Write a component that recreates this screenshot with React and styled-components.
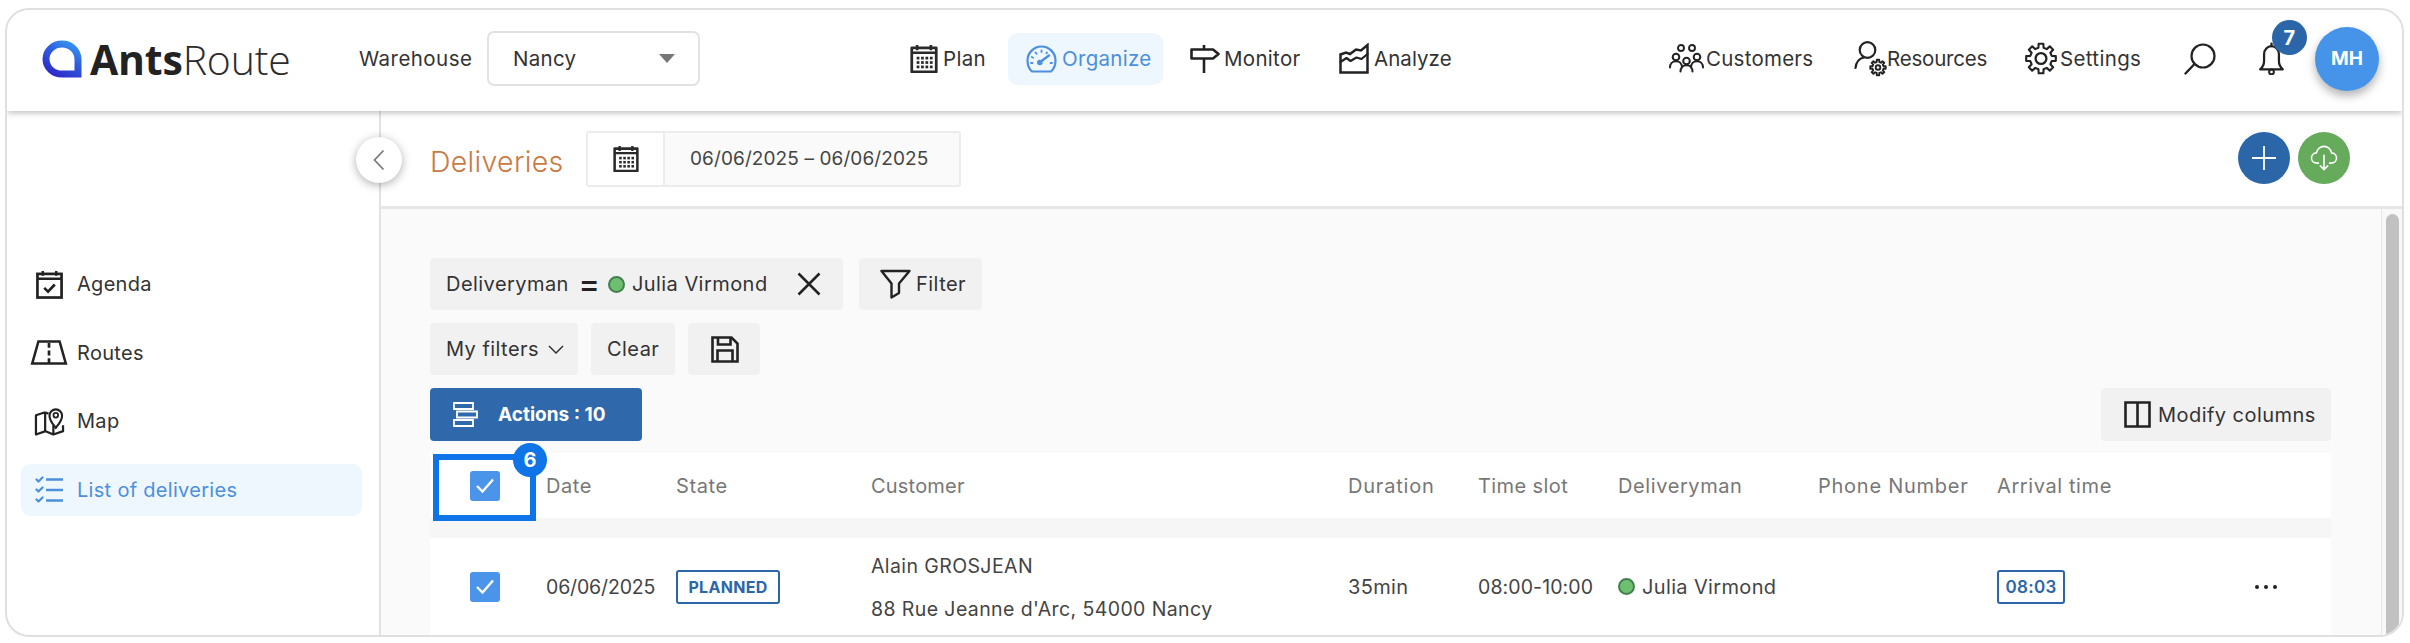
import React from "react";
import styled, { createGlobalStyle } from "styled-components";

const Global = createGlobalStyle`
  html, body { margin: 0; padding: 0; background: #fff; }
  body { font-family: Inter, "Noto Sans", "Liberation Sans", sans-serif; color: #333; overflow: hidden; }
  * { box-sizing: border-box; }
`;

const Page = styled.div`
  width: 2410px; height: 643px; padding: 8px 6px 6px 5px; background: #fff;
`;
const Frame = styled.div`
  height: 629px; border: 2px solid #dfdfdf; border-radius: 24px; overflow: hidden;
  display: flex; flex-direction: column; background: #fff;
`;
const Header = styled.header`
  height: 101px; flex: none; display: flex; align-items: center; padding: 0 23px 4px 35px;
  position: relative; z-index: 2; background: #fff; box-shadow: 0 2px 6px rgba(0,0,0,.25);
`;
const Logo = styled.div`
  width: 317px; display: flex; align-items: center; gap: 8px; flex: none;
`;
const LogoText = styled.span`
  font-family: "Open Sans", sans-serif; font-size: 41px; font-weight: 300; color: #2b2b2b; letter-spacing: -.2px;
  b { font-weight: 700; color: #222; }
`;
const FieldLabel = styled.span`
  width: 128px; flex: none; font-size: 20.5px; letter-spacing: .45px; color: #333;
`;
const Select = styled.div`
  width: 213px; height: 55px; flex: none; border: 2px solid #e2e2e2; border-radius: 7px; display: flex;
  align-items: center; justify-content: space-between; padding: 0 23px 0 24px; font-size: 20.5px; letter-spacing: .3px;
`;
const Caret = styled.span`
  width: 0; height: 0; border-left: 8px solid transparent; border-right: 8px solid transparent; border-top: 9px solid #777;
`;
const MainNav = styled.nav`
  display: flex; gap: 9px; margin-left: 192px; align-items: center;
`;
const NavItem = styled.div`
  width: ${p => p.$w}px; height: 52px; padding-left: 18px; flex: none; display: flex; align-items: center; gap: ${p => p.$gap ?? 5}px;
  border-radius: 9px; font-size: 20.5px; letter-spacing: ${p => p.$ls ?? .3}px;
  color: ${p => (p.$active ? "#4c8fdc" : "#333")};
  background: ${p => (p.$active ? "#eff7fe" : "transparent")};
`;
const RightNav = styled.nav`
  display: flex; margin-left: auto; align-items: center;
`;
const RightItem = styled.div`
  width: ${p => p.$w}px; flex: none; display: flex; align-items: center; gap: ${p => p.$gap ?? 3}px;
  font-size: 20.5px; letter-spacing: ${p => p.$ls ?? .35}px; color: #333; position: relative;
`;
const Counter = styled.span`
  position: absolute; left: 13px; top: -22px; width: 35px; height: 35px; border-radius: 50%; background: #2b66a9;
  color: #fff; font-weight: 700; font-size: 20px; display: flex; align-items: center; justify-content: center;
`;
const Avatar = styled.div`
  width: 64px; height: 64px; flex: none; border-radius: 50%; background: #4594ea; color: #fff; font-weight: 700; font-size: 19px;
  display: flex; align-items: center; justify-content: center; box-shadow: 0 5px 10px rgba(0,0,0,.3);
`;
const Body = styled.div`
  flex: 1; min-height: 0; display: flex;
`;
const Sidebar = styled.aside`
  width: 374px; flex: none; border-right: 2px solid #e2e2e2; padding: 147px 17px 0 14px;
  display: flex; flex-direction: column; gap: 16.5px; position: relative;
`;
const SideItem = styled.div`
  height: 52px; display: flex; align-items: center; border-radius: 9px; padding-left: 9px;
  font-size: 20px; letter-spacing: .3px;
  color: ${p => (p.$active ? "#4c8fdc" : "#333")};
  background: ${p => (p.$active ? "#eff7fe" : "transparent")};
`;
const SideIcon = styled.span`
  width: 47px; flex: none; display: flex; align-items: center; padding-left: ${p => p.$in ?? 0}px;
`;
const Collapse = styled.button`
  position: absolute; right: -23px; top: 26px; width: 46px; height: 46px; border: 0; border-radius: 50%; background: #fff;
  box-shadow: 0 2px 10px rgba(0,0,0,.32); display: flex; align-items: center; justify-content: center; padding: 0; z-index: 1;
`;
const Main = styled.main`
  flex: 1; min-width: 0; display: flex; flex-direction: column;
`;
const TitleBar = styled.div`
  height: 98px; flex: none; border-bottom: 3px solid #e6e6e6; display: flex; align-items: center; padding: 0 52px 0 49px;
`;
const Title = styled.h1`
  margin: 0; width: 156px; flex: none; font-size: 28.5px; font-weight: 300; letter-spacing: .3px; color: #c87a45; position: relative; top: 3px;
`;
const DateRange = styled.div`
  width: 375px; height: 56px; flex: none; display: flex; border: 2px solid #ececec; border-radius: 3px; background: #fafafa;
`;
const DateIcon = styled.div`
  width: 77px; flex: none; background: #fff; border-right: 2px solid #ececec; display: flex; align-items: center; justify-content: center;
`;
const DateText = styled.div`
  flex: 1; display: flex; align-items: center; padding-left: 25px; font-size: 19px; letter-spacing: .1px; color: #444;
`;
const Fabs = styled.div`
  margin-left: auto; display: flex; gap: 8px; position: relative; top: -1px;
`;
const Fab = styled.button`
  width: 52px; height: 52px; border: 0; padding: 0; border-radius: 50%; background: ${p => p.$bg};
  display: flex; align-items: center; justify-content: center;
`;
const Content = styled.div`
  flex: 1; min-height: 0; display: flex; background: #fafafa;
`;
const Scroll = styled.div`
  flex: 1; min-width: 0; padding: 49px 50px 0 49px; overflow: hidden; display: flex; flex-direction: column;
`;
const Scrollbar = styled.div`
  width: 21px; flex: none; background: #f8f8f8; border-left: 1px solid #e8e8e8; padding: 5px 3px 0 4px;
`;
const Thumb = styled.div`
  width: 13px; height: 430px; border-radius: 7px 7px 0 0; background: #c1c1c1;
`;
const Toolbar = styled.div`
  display: flex; gap: ${p => p.$gap ?? 12}px; margin-bottom: ${p => p.$mb ?? 13}px; justify-content: ${p => p.$between ? "space-between" : "flex-start"};
`;
const Tool = styled.div`
  width: ${p => p.$w}px; height: ${p => p.$h ?? 52}px; flex: none; display: flex; align-items: center; gap: ${p => p.$gap ?? 5}px; padding-left: ${p => p.$pad ?? 16}px;
  background: #f1f1f1; border-radius: 4px; font-size: 20px; letter-spacing: .45px; color: #333;
`;
const Spacer = styled.span`
  width: ${p => p.$w}px; flex: none;
`;
const Equal = styled.span`
  font-weight: 500; font-size: 32px; line-height: 1; color: #222; width: 27px; text-align: center; margin-left: 7px;
`;
const Dot = styled.span`
  width: 17px; height: 17px; border-radius: 50%; background: #6cc070; border: 2px solid #447f50; flex: none; display: inline-block;
`;
const ActionButton = styled.div`
  height: 53px; width: 212px; display: flex; align-items: center; padding-left: 23px; gap: 20px; background: #2f69ab;
  border-radius: 4px; color: #fff; font-weight: 700; font-size: 19px;
`;
const Grid = styled.div`
  display: grid; grid-template-columns: 116px 130px 195px 477px 130px 140px 200px 179px 215px 120px; align-items: center;
  background: #fff; flex: none; position: relative; height: ${p => p.$h}px;
`;
const GapStrip = styled.div`
  height: 20px; flex: none; background: #f6f6f7;
`;
const HeadCell = styled.div`
  font-size: 20px; letter-spacing: ${p => p.$ls ?? .6}px; color: #777; padding-top: 1px;
`;
const CheckCell = styled.div`
  padding-left: 40px; display: flex;
`;
const Check = styled.span`
  width: 30px; height: 30px; border-radius: 3px; background: #4a95e9; display: flex; align-items: center; justify-content: center; position: relative; z-index: 2;
`;
const Highlight = styled.div`
  position: absolute; left: 3px; top: 1px; width: 103px; height: 67px; border: 6px solid #0e74e8; z-index: 1;
`;
const HighlightBadge = styled.span`
  position: absolute; right: -17px; top: -17px; width: 34px; height: 34px; border-radius: 50%; background: #0e74e8; color: #fff;
  font-weight: 700; font-size: 20px; display: flex; align-items: center; justify-content: center;
`;
const Cell = styled.div`
  font-size: ${p => p.$fs ?? 20}px; letter-spacing: ${p => p.$ls ?? .35}px; color: #444; display: flex; align-items: center; gap: 7px;
`;
const Stack = styled.div`
  display: flex; flex-direction: column; gap: 22px; padding-top: 2px; font-size: 19.5px; letter-spacing: .4px; color: #444; line-height: 21px;
`;
const Tag = styled.span`
  display: inline-flex; align-items: center; justify-content: center; height: 34px; width: ${p => p.$w}px; border: 2px solid #2b66a9; border-radius: 3px;
  color: #2b66a9; font-weight: ${p => p.$w > 80 ? 700 : 600}; font-size: ${p => p.$w > 80 ? 16 : 17}px; letter-spacing: .3px;
`;
const Dots = styled.div`
  display: flex; gap: 5px; justify-content: center; padding-right: 12px;
  span { width: 4px; height: 4px; border-radius: 50%; background: #222; }
`;

const S = { fill: "none", stroke: "currentColor", strokeLinecap: "round", strokeLinejoin: "round" };

const CalGridIcon = ({ size = 28, color = "#2a2a2a" }) => (
  <svg width={size} height={size * 1.05} viewBox="0 0 28 30" style={{ color, flex: "none" }}>
    <rect x="1.5" y="4" width="25" height="24.5" {...S} strokeWidth="2.8" strokeLinecap="butt" />
    <path d="M1.5 9h25M7 1v5.500M21 1v5.500" {...S} strokeWidth="2.6" strokeLinecap="butt" />
    {[13, 17.5, 22].map(y => [7, 11.5, 16, 20.5].map(x => (
      <rect key={`${x}-${y}`} x={x - .5} y={y} width="2.8" height="2.8" fill="currentColor" />
    )))}
  </svg>
);
const GaugeIcon = () => (
  <svg width="31" height="28" viewBox="0 0 31 28" style={{ color: "#4c8fdc", flex: "none" }}>
    <path d="M6 26.5C3 24 1.5 20 1.5 15.5 1.5 7.8 7.8 1.5 15.5 1.5S29.5 7.8 29.5 15.5c0 4.5-1.5 8.5-4.5 11z" {...S} strokeWidth="2.2" />
    <path d="M13.5 17.5L23 10.5" {...S} strokeWidth="2.4" />
    <circle cx="13.8" cy="17.5" r="2.8" fill="currentColor" />
    <path d="M15.5 5.5v1.5M9.5 7.5l1 1.2M5.8 12l1.4.7M5 18h1.5M21 7.5l-.6.9M26 18h-1.5" {...S} strokeWidth="1.8" />
  </svg>
);
const SignIcon = () => (
  <svg width="30" height="30" viewBox="0 0 30 30" style={{ flex: "none", color: "#222" }}>
    <path d="M1.5 5.5h21.5l5.500 4.500-5.500 4.500H1.500z" {...S} strokeWidth="2.6" strokeLinecap="butt" />
    <path d="M14 1v4M14 14.5V29" {...S} strokeWidth="2.6" strokeLinecap="butt" />
  </svg>
);
const ChartIcon = () => (
  <svg width="30" height="31" viewBox="0 0 30 31" style={{ flex: "none", color: "#222" }}>
    <path d="M1.500 11.500V29.500H28.500V2L22 7.500l-5-1-6 4.500-4-1.500z" {...S} strokeWidth="2.500" strokeLinejoin="miter" />
    <path d="M1.500 19l6-4 4 3 6-3.500 5 1.500 6-5" {...S} strokeWidth="2.200" />
  </svg>
);
const Person = ({ x, y, r = 4.2 }) => (
  <g>
    <circle cx={x} cy={y} r={r} {...S} strokeWidth="2" />
    <path d={`M${x - 6} ${y + 10.5}c0-4 2.500-6.300 6-6.300s6 2.300 6 6.300`} {...S} strokeWidth="2" />
  </g>
);
const PeopleIcon = () => (
  <svg width="35" height="30" viewBox="0 0 35 30" style={{ flex: "none", color: "#222" }}>
    <circle cx="12" cy="4" r="3" {...S} strokeWidth="1.9" />
    <circle cx="23" cy="4" r="3" {...S} strokeWidth="1.9" />
    <Person x={7} y={13} r={3.3} />
    <Person x={28} y={13} r={3.3} />
    <Person x={17.5} y={17} r={3.3} />
  </svg>
);
// Builds a closed gear outline with eight teeth around the origin.
const gearPath = (outer, inner, teeth) => {
  const pts = [];
  const step = (2 * Math.PI) / teeth;
  for (let i = 0; i < teeth; i++) {
    const a = i * step - Math.PI / 2;
    const t = step * 0.2;
    const v = step * 0.3;
    pts.push([Math.cos(a - v) * inner, Math.sin(a - v) * inner]);
    pts.push([Math.cos(a - t) * outer, Math.sin(a - t) * outer]);
    pts.push([Math.cos(a + t) * outer, Math.sin(a + t) * outer]);
    pts.push([Math.cos(a + v) * inner, Math.sin(a + v) * inner]);
  }
  return "M" + pts.map(p => `${p[0].toFixed(2)} ${p[1].toFixed(2)}`).join("L") + "Z";
};
const UserGearIcon = () => (
  <svg width="33" height="36" viewBox="0 0 33 36" style={{ flex: "none", color: "#222" }}>
    <circle cx="13.500" cy="9" r="7.800" {...S} strokeWidth="2.200" />
    <path d="M1.500 27c.5-5.500 3.500-9.500 8.500-10.500" {...S} strokeWidth="2.200" />
    <path d={gearPath(7.800, 5.600, 8)} transform="translate(24 26.500)" {...S} strokeWidth="1.900" />
    <circle cx="24" cy="26.500" r="2.300" {...S} strokeWidth="1.900" />
  </svg>
);
const GearIcon = () => (
  <svg width="32" height="33" viewBox="0 0 32 33" style={{ flex: "none", color: "#222" }}>
    <path d={gearPath(15, 11, 8)} transform="translate(16 16.500)" {...S} strokeWidth="2.100" />
    <circle cx="16" cy="16.500" r="5.400" {...S} strokeWidth="2.300" />
  </svg>
);
const SearchIcon = () => (
  <svg width="32" height="32" viewBox="0 0 32 32" style={{ flex: "none", color: "#222" }}>
    <circle cx="19" cy="13" r="11.500" {...S} strokeWidth="2.200" />
    <path d="M10.500 21L1.500 30.500" {...S} strokeWidth="2.400" />
  </svg>
);
const BellIcon = () => (
  <svg width="25" height="33" viewBox="0 0 24 32" style={{ flex: "none", color: "#222" }}>
    <path d="M1 26.500h22c-2.500-2-3.800-3.500-3.800-8V12c0-4.500-3.200-8-7.200-8S4.800 7.500 4.800 12v6.500c0 4.500-1.300 6-3.800 8z" {...S} strokeWidth="2.200" />
    <path d="M12 1.500V4" {...S} strokeWidth="2.200" />
    <circle cx="12" cy="29" r="2.300" {...S} strokeWidth="2" />
  </svg>
);
const AgendaIcon = () => (
  <svg width="27" height="29" viewBox="0 0 28 30">
    <rect x="1.500" y="4" width="25" height="24.500" fill="none" stroke="#222" strokeWidth="2.800" />
    <path d="M1.500 9h25M7 1v5M21 1v5" fill="none" stroke="#222" strokeWidth="2.500" />
    <path d="M8.500 18.500l4 4 7-7.500" fill="none" stroke="#222" strokeWidth="2.700" />
  </svg>
);
const RoadIcon = () => (
  <svg width="38" height="25" viewBox="0 0 38 26">
    <path d="M1.500 24.500L8 1.500h22l6.500 23z" fill="none" stroke="#222" strokeWidth="2.600" />
    <path d="M19 3v5M19 11v5M19 19v5" fill="none" stroke="#222" strokeWidth="2.800" />
  </svg>
);
const MapIcon = () => (
  <svg width="31" height="30" viewBox="0 0 31 31">
    <path d="M11 6.500L1.500 9.500v20l10-3.500 8 3.500 10-3.500v-6M11 6.500v19.500M19.500 20v9.500M11 6.500l3.500 1.500" fill="none" stroke="#222" strokeWidth="2.300" strokeLinejoin="round" />
    <path d="M22 22.500c-3.500-4.500-6.500-7.500-6.500-12.500a6.500 6.500 0 0 1 13 0c0 5-3 8-6.500 12.500z" fill="#fff" stroke="#222" strokeWidth="2.200" />
    <circle cx="22" cy="9.500" r="2.400" fill="none" stroke="#222" strokeWidth="1.800" />
  </svg>
);
const ListIcon = () => (
  <svg width="29" height="28" viewBox="0 0 29 28" style={{ color: "#4c8fdc" }}>
    <path d="M1.500 3.500L3.500 5.500 7.500 1.500M1.500 13.500l2 2 4-4M1.500 23.500l2 2 4-4" {...S} strokeWidth="2.200" />
    <path d="M11 3.500h17M11 14h17M11 24.500h17" {...S} strokeWidth="2.500" strokeLinecap="butt" />
  </svg>
);
const Tick = () => (
  <svg width="20" height="17" viewBox="0 0 20 17"><path d="M2 9l5.500 5.500L18 2.500" fill="none" stroke="#fff" strokeWidth="2.400" /></svg>
);
const LogoMark = () => (
  <svg width="40" height="38" viewBox="0 0 40 38" style={{ flex: "none" }}>
    <defs>
      <linearGradient id="lg" x1="0.2" y1="1" x2="0.8" y2="0">
        <stop offset="0" stopColor="#2d2bc8" />
        <stop offset=".6" stopColor="#2f5fe0" />
        <stop offset="1" stopColor="#3590ee" />
      </linearGradient>
    </defs>
    <path d="M20 4C29 4 36 10.800 36 19.500V34H20C11 34 4 27.500 4 19 4 10.800 11 4 20 4Z" fill="none" stroke="url(#lg)" strokeWidth="7" />
  </svg>
);

export default function App() {
  return (
    <>
      <Global />
      <Page>
        <Frame>
          <Header>
            <Logo>
              <LogoMark />
              <LogoText><b>Ants</b>Route</LogoText>
            </Logo>
            <FieldLabel>Warehouse</FieldLabel>
            <Select>Nancy<Caret /></Select>
            <MainNav>
              <NavItem $w={107}><CalGridIcon />Plan</NavItem>
              <NavItem $w={155} $active><GaugeIcon />Organize</NavItem>
              <NavItem $w={140} $gap={4}><SignIcon />Monitor</NavItem>
              <NavItem $w={150} $ls={.05}><ChartIcon />Analyze</NavItem>
            </MainNav>
            <RightNav>
              <RightItem $w={185} $gap={2} $ls={.25}><PeopleIcon />Customers</RightItem>
              <RightItem $w={171} $gap={0} $ls={-.2}><UserGearIcon />Resources</RightItem>
              <RightItem $w={159} $gap={3}><GearIcon />Settings</RightItem>
              <RightItem $w={75}><SearchIcon /></RightItem>
              <RightItem $w={56}><BellIcon /><Counter>7</Counter></RightItem>
              <Avatar>MH</Avatar>
            </RightNav>
          </Header>
          <Body>
            <Sidebar>
              <Collapse aria-label="collapse">
                <svg width="12" height="22" viewBox="0 0 12 22"><path d="M10.500 1.500L1.500 11l9 9.500" fill="none" stroke="#777" strokeWidth="1.700" /></svg>
              </Collapse>
              <SideItem><SideIcon $in={6}><AgendaIcon /></SideIcon>Agenda</SideItem>
              <SideItem><SideIcon><RoadIcon /></SideIcon>Routes</SideItem>
              <SideItem><SideIcon $in={4}><MapIcon /></SideIcon>Map</SideItem>
              <SideItem $active><SideIcon $in={5}><ListIcon /></SideIcon>List of deliveries</SideItem>
            </Sidebar>
            <Main>
              <TitleBar>
                <Title>Deliveries</Title>
                <DateRange>
                  <DateIcon><CalGridIcon size={26} /></DateIcon>
                  <DateText>06/06/2025 – 06/06/2025</DateText>
                </DateRange>
                <Fabs>
                  <Fab $bg="#2b66a9" aria-label="add">
                    <svg width="26" height="26" viewBox="0 0 26 26"><path d="M13 1v24M1 13h24" stroke="#fff" strokeWidth="1.800" /></svg>
                  </Fab>
                  <Fab $bg="#66aa5c" aria-label="download">
                    <svg width="28" height="26" viewBox="0 0 30 28">
                      <path d="M9 19.500H7.500C4 19.500 1.500 17 1.500 14s2.300-5.300 5.300-5.500C7.500 4.500 11 1.500 15 1.500s7.500 3 8.200 7c3 .2 5.300 2.500 5.300 5.500s-2.500 5.500-6 5.500H21" fill="none" stroke="#fff" strokeWidth="1.700" strokeLinecap="round" />
                      <path d="M15 11v15M11 22.500l4 4 4-4" fill="none" stroke="#fff" strokeWidth="1.700" strokeLinecap="round" />
                    </svg>
                  </Fab>
                </Fabs>
              </TitleBar>
              <Content>
                <Scroll>
                  <Toolbar $gap={16}>
                    <Tool $w={413} $gap={0}>
                      Deliveryman<Equal>=</Equal><Spacer $w={5} /><Dot /><Spacer $w={7} />Julia Virmond<Spacer $w={29} />
                      <svg width="24" height="24" viewBox="0 0 24 24"><path d="M1.500 1.500l21 21M22.500 1.500l-21 21" stroke="#222" strokeWidth="2.500" /></svg>
                    </Tool>
                    <Tool $w={123} $pad={21}>
                      <svg width="31" height="30" viewBox="0 0 31 30" style={{ flex: "none" }}><path d="M1.500 2h28L19 14.500V24l-7.500 4.500V14.500z" fill="none" stroke="#222" strokeWidth="2.400" strokeLinejoin="round" /></svg>
                      Filter
                    </Tool>
                  </Toolbar>
                  <Toolbar $gap={13}>
                    <Tool $w={148} $gap={9}>
                      My filters
                      <svg width="16" height="9" viewBox="0 0 16 9" style={{ flex: "none" }}><path d="M1 1l7 7 7-7" fill="none" stroke="#333" strokeWidth="1.500" /></svg>
                    </Tool>
                    <Tool $w={84}>Clear</Tool>
                    <Tool $w={72} $pad={23}>
                      <svg width="28" height="27" viewBox="0 0 28 27"><path d="M1.500 1.500h19l6 6v18h-25zM7 1.500v7h12.500v-7M6.500 25.500V14.500h15v11" fill="none" stroke="#222" strokeWidth="2.600" /></svg>
                    </Tool>
                  </Toolbar>
                  <Toolbar $between $mb={12}>
                    <ActionButton>
                      <svg width="25" height="25" viewBox="0 0 25 25"><path d="M1 1h19v6H1zM4 9.500h20v6H4zM1 18h19v6H1z" fill="none" stroke="#fff" strokeWidth="1.800" /></svg>
                      Actions : 10
                    </ActionButton>
                    <Tool $w={230} $h={53} $gap={7} $pad={23}>
                      <svg width="27" height="27" viewBox="0 0 27 27" style={{ flex: "none" }}><path d="M1.500 1.500h24v24h-24zM13.500 1.500v24" fill="none" stroke="#222" strokeWidth="2.600" /></svg>
                      Modify columns
                    </Tool>
                  </Toolbar>
                  <Grid $h={65}>
                    <Highlight><HighlightBadge>6</HighlightBadge></Highlight>
                    <CheckCell><Check><Tick /></Check></CheckCell>
                    <HeadCell>Date</HeadCell>
                    <HeadCell>State</HeadCell>
                    <HeadCell $ls={.2}>Customer</HeadCell>
                    <HeadCell $ls={.8}>Duration</HeadCell>
                    <HeadCell $ls={.4}>Time slot</HeadCell>
                    <HeadCell>Deliveryman</HeadCell>
                    <HeadCell $ls={.75}>Phone Number</HeadCell>
                    <HeadCell>Arrival time</HeadCell>
                    <span />
                  </Grid>
                  <GapStrip />
                  <Grid $h={97}>
                    <CheckCell><Check><Tick /></Check></CheckCell>
                    <Cell $fs={19.5} $ls={-.15}>06/06/2025</Cell>
                    <Cell><Tag $w={104}>PLANNED</Tag></Cell>
                    <Stack><span>Alain GROSJEAN</span><span>88 Rue Jeanne d'Arc, 54000 Nancy</span></Stack>
                    <Cell>35min</Cell>
                    <Cell $fs={19.5} $ls={.1}>08:00-10:00</Cell>
                    <Cell><Dot />Julia Virmond</Cell>
                    <span />
                    <Cell><Tag $w={68}>08:03</Tag></Cell>
                    <Dots><span /><span /><span /></Dots>
                  </Grid>
                </Scroll>
                <Scrollbar><Thumb /></Scrollbar>
              </Content>
            </Main>
          </Body>
        </Frame>
      </Page>
    </>
  );
}
